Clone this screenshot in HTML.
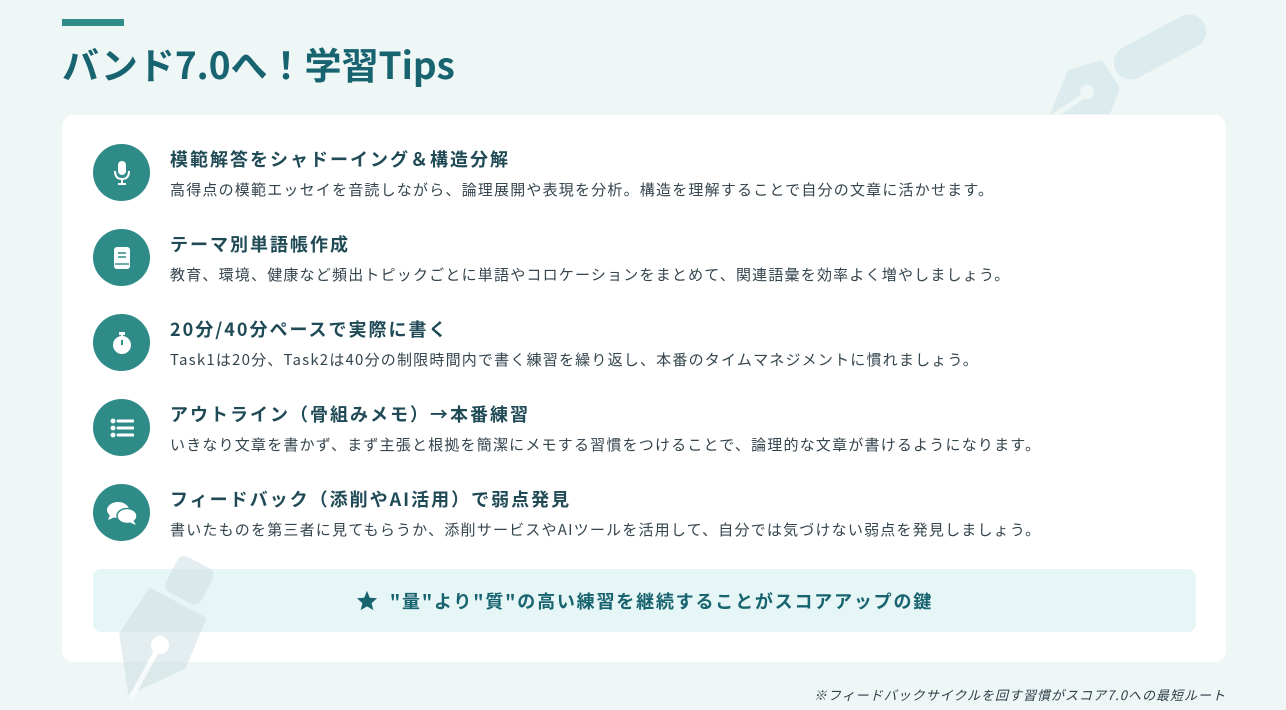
<!DOCTYPE html>
<html><head><meta charset="utf-8"><style>
*{margin:0;padding:0;box-sizing:border-box}
body{width:1286px;height:706px;background:#eef6f6;position:relative;overflow:hidden;font-family:"Noto Sans CJK JP","Liberation Sans",sans-serif;color:#2d3e48}
.bar{position:absolute;left:62px;top:19px;width:62px;height:7px;background:#2e8b87}
h1{position:absolute;left:62px;top:36px;font-size:37px;font-weight:700;color:#17636f;line-height:54px;white-space:nowrap}
.card{position:absolute;left:62px;top:115px;width:1164px;height:547px;background:#fff;border-radius:12px}
.item{position:absolute;left:31px}
.ic{position:absolute;left:0;top:0;width:57px;height:57px;border-radius:50%;background:#2e8b87;display:flex;align-items:center;justify-content:center}
.t{position:absolute;left:77px;top:2px;white-space:nowrap;font-size:18px;font-weight:700;color:#1f4a56;line-height:26px;letter-spacing:2px}
.d{position:absolute;left:77px;top:35px;white-space:nowrap;font-size:15px;color:#34454e;line-height:22px;letter-spacing:1.2px}
.call{position:absolute;left:31px;top:454px;width:1103px;height:63px;background:#e6f5f5;border-radius:8px;display:flex;align-items:center;justify-content:center;font-size:18px;font-weight:700;color:#17636f;letter-spacing:1.8px}
.foot{position:absolute;right:60px;top:685px;font-size:13px;font-style:italic;color:#2d3e48;letter-spacing:1px;white-space:nowrap;line-height:20px}
</style></head><body>
<svg style="position:absolute;left:0;top:0" width="1286" height="120">
<g fill="#dcebee">
<rect x="1110" y="30" width="100" height="34" rx="17" transform="rotate(-28 1160 47)"/>
<polygon points="1068,70 1102,60 1120,88 1110,114 1050,114"/>
</g>
<circle cx="1087" cy="92" r="7" fill="#eef6f6"/>
<path d="M1084 96 L1055 115" stroke="#eef6f6" stroke-width="5"/>
</svg>
<div class="bar"></div>
<h1>バンド7.0へ！学習Tips</h1>
<div class="card">
 <div class="item" style="top:29px"><div class="ic"><svg width="20" height="26" viewBox="0 0 20 26"><rect x="6" y="1" width="8" height="14" rx="4" fill="#fff"/><path d="M3 11 Q3 19 10 19 Q17 19 17 11" fill="none" stroke="#fff" stroke-width="2"/><path d="M10 19 V24 M6 24 H14" stroke="#fff" stroke-width="2"/></svg></div>
 <div class="t">模範解答をシャドーイング＆構造分解</div><div class="d">高得点の模範エッセイを音読しながら、論理展開や表現を分析。構造を理解することで自分の文章に活かせます。</div></div>
 <div class="item" style="top:114px"><div class="ic"><svg width="20" height="24" viewBox="0 0 20 24"><rect x="2" y="1" width="16" height="22" rx="3" fill="#fff"/><path d="M6 7 H14 M6 11 H14" stroke="#2e8b87" stroke-width="1.6"/><path d="M3 18 H17" stroke="#2e8b87" stroke-width="1.4"/></svg></div>
 <div class="t">テーマ別単語帳作成</div><div class="d">教育、環境、健康など頻出トピックごとに単語やコロケーションをまとめて、関連語彙を効率よく増やしましょう。</div></div>
 <div class="item" style="top:199px"><div class="ic"><svg width="22" height="24" viewBox="0 0 22 24"><circle cx="11" cy="14" r="9" fill="#fff"/><rect x="8" y="1" width="6" height="3" fill="#fff"/><rect x="10" y="3" width="2" height="3" fill="#fff"/><path d="M11 9 V14" stroke="#2e8b87" stroke-width="2"/></svg></div>
 <div class="t">20分/40分ペースで実際に書く</div><div class="d">Task1は20分、Task2は40分の制限時間内で書く練習を繰り返し、本番のタイムマネジメントに慣れましょう。</div></div>
 <div class="item" style="top:284px"><div class="ic"><svg width="24" height="20" viewBox="0 0 24 20"><circle cx="3" cy="3" r="2.4" fill="#fff"/><circle cx="3" cy="10" r="2.4" fill="#fff"/><circle cx="3" cy="17" r="2.4" fill="#fff"/><path d="M8 3H23M8 10H23M8 17H23" stroke="#fff" stroke-width="3" stroke-linecap="round"/></svg></div>
 <div class="t">アウトライン（骨組みメモ）→本番練習</div><div class="d">いきなり文章を書かず、まず主張と根拠を簡潔にメモする習慣をつけることで、論理的な文章が書けるようになります。</div></div>
 <div class="item" style="top:369px"><div class="ic"><svg width="32" height="26" viewBox="0 0 32 26"><ellipse cx="12" cy="10" rx="11" ry="8" fill="#fff"/><path d="M4 15 L2 20 L9 17Z" fill="#fff"/><ellipse cx="21" cy="16" rx="10" ry="7.5" fill="#fff" stroke="#2e8b87" stroke-width="1.5"/><path d="M27 20 L30 25 L23 22Z" fill="#fff"/></svg></div>
 <div class="t">フィードバック（添削やAI活用）で弱点発見</div><div class="d">書いたものを第三者に見てもらうか、添削サービスやAIツールを活用して、自分では気づけない弱点を発見しましょう。</div></div>
 <div class="call"><svg width="22" height="21" viewBox="0 0 24 23" style="margin-right:12px"><path d="M12 1 L15 8.5 L23 9 L17 14.5 L19 22 L12 18 L5 22 L7 14.5 L1 9 L9 8.5Z" fill="#17636f"/></svg>"量"より"質"の高い練習を継続することがスコアアップの鍵</div>
</div>
<svg style="position:absolute;left:100px;top:550px;opacity:0.55" width="120" height="160" viewBox="0 0 120 160">
<g transform="rotate(28 55 80)" fill="#cfe0e3">
<rect x="42" y="0" width="40" height="40" rx="8"/>
<path d="M30 45 L95 45 L100 100 L62 150 L25 100 Z"/>
</g>
<circle cx="60" cy="95" r="9" fill="#fff"/>
<path d="M57 100 L30 150" stroke="#fff" stroke-width="5"/>
</svg>
<div class="foot">※フィードバックサイクルを回す習慣がスコア7.0への最短ルート</div>
</body></html>
